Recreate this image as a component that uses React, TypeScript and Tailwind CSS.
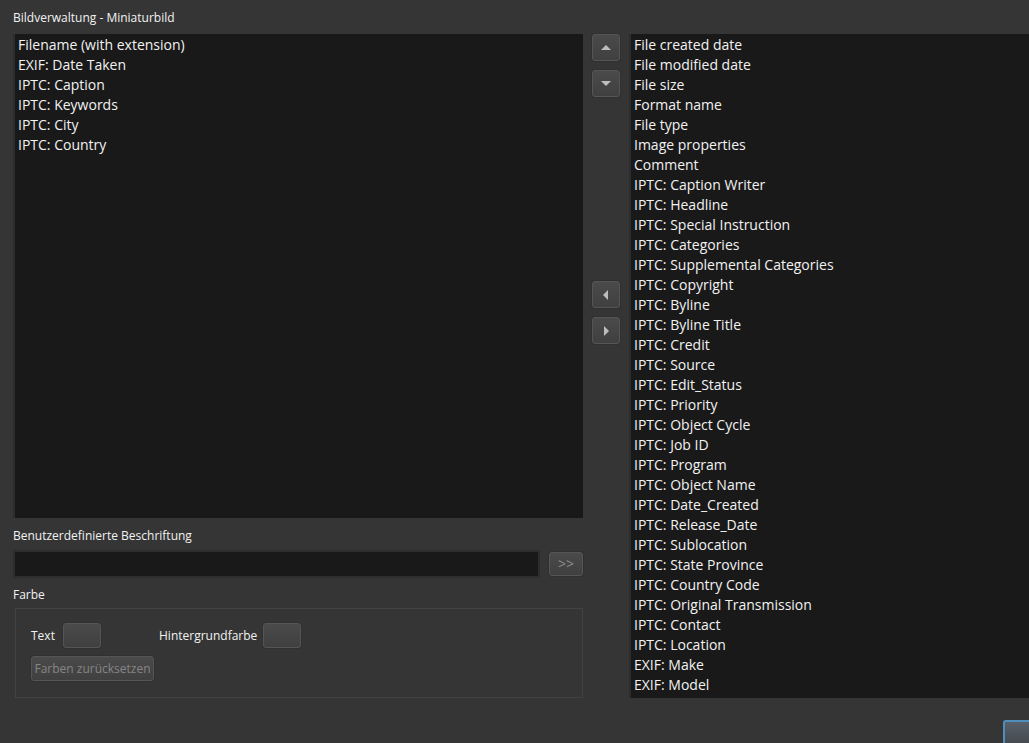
import React, { ChangeEvent, useState } from "react";

const thumbnailFields = [
  "Filename (with extension)",
  "EXIF: Date Taken",
  "IPTC: Caption",
  "IPTC: Keywords",
  "IPTC: City",
  "IPTC: Country",
];

const otherFields = [
  "File created date",
  "File modified date",
  "File size",
  "Format name",
  "File type",
  "Image properties",
  "Comment",
  "IPTC: Caption Writer",
  "IPTC: Headline",
  "IPTC: Special Instruction",
  "IPTC: Categories",
  "IPTC: Supplemental Categories",
  "IPTC: Copyright",
  "IPTC: Byline",
  "IPTC: Byline Title",
  "IPTC: Credit",
  "IPTC: Source",
  "IPTC: Edit_Status",
  "IPTC: Priority",
  "IPTC: Object Cycle",
  "IPTC: Job ID",
  "IPTC: Program",
  "IPTC: Object Name",
  "IPTC: Date_Created",
  "IPTC: Release_Date",
  "IPTC: Sublocation",
  "IPTC: State Province",
  "IPTC: Country Code",
  "IPTC: Original Transmission",
  "IPTC: Contact",
  "IPTC: Location",
  "EXIF: Make",
  "EXIF: Model",
];

const buttonStyle =
  "rounded-[3px] border border-[#555555] bg-linear-to-b from-[#4a4a4a] to-[#404040] shadow-[0_0_0_1px_#303030]";

interface FieldListProps {
  id: string;
  label?: string;
  fields: string[];
  selected: string[];
  onSelect: (fields: string[]) => void;
}

function FieldList({ id, label, fields, selected, onSelect }: FieldListProps) {
  function handleChange(e: ChangeEvent<HTMLSelectElement>) {
    onSelect(Array.from(e.target.selectedOptions, (option) => option.value));
  }

  return (
    <select
      multiple
      id={id}
      aria-label={label}
      size={fields.length}
      value={selected}
      onChange={handleChange}
      className="w-full min-w-0 flex-1 overflow-hidden border-l-2 border-[#2d2d2d] bg-[#191919] py-px text-sm leading-5 text-[#f2f2f2] outline-none"
    >
      {fields.map((field) => (
        <option key={field} value={field} className="h-5 px-[3px] py-0 leading-5">
          {field}
        </option>
      ))}
    </select>
  );
}

function ArrowButton({ label, points, onClick }: { label: string; points: string; onClick: () => void }) {
  return (
    <button
      type="button"
      aria-label={label}
      onClick={onClick}
      className={`flex h-[27px] w-7 items-center justify-center ${buttonStyle}`}
    >
      <svg width="12" height="12" viewBox="0 0 12 12" fill="#bdbdbd">
        <polygon points={points} />
      </svg>
    </button>
  );
}

function App() {
  const [used, setUsed] = useState(thumbnailFields);
  const [available, setAvailable] = useState(otherFields);
  const [usedSelection, setUsedSelection] = useState<string[]>([]);
  const [availableSelection, setAvailableSelection] = useState<string[]>([]);
  const [caption, setCaption] = useState("");

  // Shift the first selected field one place up or down
  function move(step: number) {
    const from = used.indexOf(usedSelection[0]);
    const to = from + step;
    if (from < 0 || to < 0 || to >= used.length) {
      return;
    }
    const next = [...used];
    next[from] = used[to];
    next[to] = used[from];
    setUsed(next);
  }

  function add() {
    setUsed([...used, ...availableSelection]);
    setAvailable(available.filter((field) => !availableSelection.includes(field)));
    setAvailableSelection([]);
  }

  function remove() {
    setAvailable([...available, ...usedSelection]);
    setUsed(used.filter((field) => !usedSelection.includes(field)));
    setUsedSelection([]);
  }

  return (
    <div className="flex min-h-screen flex-col overflow-hidden bg-[#353535] font-['Open_Sans',sans-serif] text-xs leading-[18px] text-[#f2f2f2]">
      <label htmlFor="used" className="mb-[7px] pt-[9px] pl-[13px]">
        Bildverwaltung - Miniaturbild
      </label>

      <main className="grid grid-cols-[57fr_28px_40fr] gap-[9px] pl-[13px]">
        <div className="flex min-w-0 flex-col">
          <FieldList id="used" fields={used} selected={usedSelection} onSelect={setUsedSelection} />

          <label htmlFor="caption" className="mt-[9px] mb-[5px]">
            Benutzerdefinierte Beschriftung
          </label>
          <div className="flex items-center gap-[9px]">
            <input
              type="text"
              id="caption"
              value={caption}
              onChange={(e) => setCaption(e.target.value)}
              className="h-7 min-w-0 flex-1 border-2 border-[#2d2d2d] bg-[#191919] px-1 text-sm outline-none"
            />
            <button type="button" disabled={!caption} className={`h-6 w-[34px] text-sm text-[#8c8c8c] ${buttonStyle}`}>
              &gt;&gt;
            </button>
          </div>

          <h2 id="colors" className="mt-2 mb-1">
            Farbe
          </h2>
          <div
            role="group"
            aria-labelledby="colors"
            className="ml-0.5 flex min-h-[90px] flex-col items-start gap-2 border border-[#424242] px-[15px] pt-3.5"
          >
            <div className="flex items-center">
              <label htmlFor="textColor" className="w-8">
                Text
              </label>
              <button type="button" id="textColor" className={`h-[25px] w-[38px] ${buttonStyle}`} />
              <label htmlFor="backgroundColor" className="ml-[58px] w-[104px]">
                Hintergrundfarbe
              </label>
              <button type="button" id="backgroundColor" className={`h-[25px] w-[38px] ${buttonStyle}`} />
            </div>
            <button type="button" disabled className={`h-[25px] w-[123px] text-[#858585] ${buttonStyle}`}>
              Farben zurücksetzen
            </button>
          </div>
        </div>

        <div className="flex flex-col gap-46">
          <div className="flex flex-col gap-[9px]">
            <ArrowButton label="Nach oben" points="6,3 11,8 1,8" onClick={() => move(-1)} />
            <ArrowButton label="Nach unten" points="1,3 11,3 6,8" onClick={() => move(1)} />
          </div>
          <div className="flex flex-col gap-[9px]">
            <ArrowButton label="Hinzufügen" points="8,1 8,11 3,6" onClick={add} />
            <ArrowButton label="Entfernen" points="4,1 9,6 4,11" onClick={remove} />
          </div>
        </div>

        <div className="flex min-h-[664px] min-w-0 flex-col">
          <FieldList
            id="available"
            label="Verfügbare Felder"
            fields={available}
            selected={availableSelection}
            onSelect={setAvailableSelection}
          />
        </div>
      </main>

      <footer className="mt-[22px] flex flex-1 justify-end">
        <button
          type="button"
          aria-label="OK"
          className="min-h-[23px] w-[26px] rounded-tl-[3px] border-t-2 border-l-2 border-[#4f8fc0] bg-linear-to-b from-[#58606a] to-[#454a50]"
        />
      </footer>
    </div>
  );
}

export default App;
